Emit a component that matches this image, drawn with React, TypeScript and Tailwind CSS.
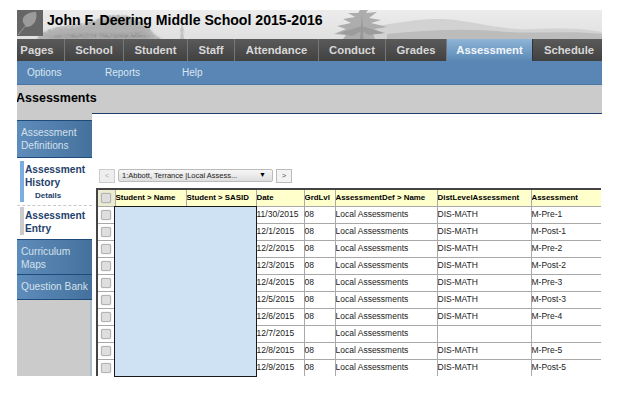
import React from 'react';

const tabs = [
  { label: 'Pages', w: 'w-[48px] pr-[7px]' },
  { label: 'School', w: 'w-[59px]' },
  { label: 'Student', w: 'w-[64px]' },
  { label: 'Staff', w: 'w-[47px]' },
  { label: 'Attendance', w: 'w-[84px]' },
  { label: 'Conduct', w: 'w-[67px]' },
  { label: 'Grades', w: 'w-[61px]' },
  { label: 'Assessment', w: 'w-[86px]', active: true },
  { label: 'Schedule', w: 'w-[69px] pl-[3px]' }
];

const rows = [
  ['11/30/2015', '08', 'DIS-MATH', 'M-Pre-1'],
  ['12/1/2015', '08', 'DIS-MATH', 'M-Post-1'],
  ['12/2/2015', '08', 'DIS-MATH', 'M-Pre-2'],
  ['12/3/2015', '08', 'DIS-MATH', 'M-Post-2'],
  ['12/4/2015', '08', 'DIS-MATH', 'M-Pre-3'],
  ['12/5/2015', '08', 'DIS-MATH', 'M-Post-3'],
  ['12/6/2015', '08', 'DIS-MATH', 'M-Pre-4'],
  ['12/7/2015', '', '', ''],
  ['12/8/2015', '08', 'DIS-MATH', 'M-Pre-5'],
  ['12/9/2015', '08', 'DIS-MATH', 'M-Post-5']
];

function Check() {
  return <div className="h-[10px] w-[10px] rounded-[2px] border border-[#b4b4b4] bg-[#dedede] shadow-[0_0_1px_#999]" />;
}

function SideBlue({ children, className = '' }: { children: React.ReactNode; className?: string }) {
  return (
    <div className={`border-b border-[#1f4a7c] bg-gradient-to-r from-[#5f8dbb] to-[#44719c] pl-[4px] text-[10.2px] leading-[12.5px] text-[#d4e0ec] ${className}`}>
      {children}
    </div>
  );
}

function HeaderArt() {
  return (
    <svg className="absolute inset-0 h-full w-full" viewBox="0 0 585 29">
      <defs>
        <filter id="soft" x="-20%" y="-20%" width="140%" height="140%">
          <feGaussianBlur stdDeviation="1.6" />
        </filter>
        <filter id="leafy" x="0" y="0" width="100%" height="100%">
          <feTurbulence type="fractalNoise" baseFrequency="0.35" numOctaves="2" seed="4" />
          <feColorMatrix values="0 0 0 0 0.42  0 0 0 0 0.42  0 0 0 0 0.42  1.8 0 0 0 -0.4" />
          <feComposite in2="SourceGraphic" operator="in" />
        </filter>
        <filter id="needle" x="-5%" y="-5%" width="110%" height="110%">
          <feGaussianBlur stdDeviation="0.5" />
        </filter>
      </defs>
      {/* far hills */}
      <path d="M340 18 C380 14 400 8 425 9 C450 10 470 17 500 19 C525 20 550 16 585 22 V29 H340 Z" fill="#d2d2d2" />
      <path d="M370 24 C410 20 450 18 490 22 C520 24 555 20 585 24 V29 H370 Z" fill="#bcbcbc" />
      {/* tree mass on the left */}
      <g filter="url(#soft)">
        <path d="M20 29 C30 14 60 20 80 11 C95 4 115 6 124 14 C135 18 132 24 145 29 Z" fill="#b2b2b2" />
        <path d="M26 29 C50 20 90 26 125 22 L135 29 Z" fill="#8f8f8f" />
      </g>
      <path d="M20 29 C30 12 60 18 80 9 C95 2 115 4 124 12 C135 16 132 24 145 29 Z" fill="#888" filter="url(#leafy)" />
      {/* small distant tree */}
      <path d="M163 29 L164 20 L162 24 L165 14 L168 24 L166 20 L167 29 Z" fill="#c4c4c4" />
      {/* pine */}
      <g fill="#adadad" filter="url(#needle)">
        <path d="M343 0 L351 0 L349 3 L360 2 L352 8 L364 10 L354 13 L370 17 L357 19 L365 24 L356 24 L358 29 H326 L329 25 L317 24 L329 19 L320 16 L334 13 L326 9 L338 7 L331 3 L341 3 Z" />
      </g>
      <path d="M322 23 L345 16 L368 23 L352 25 L345 21 L335 26 Z" fill="#9c9c9c" filter="url(#needle)" />
      <path d="M345 4 L346.5 29 H343 Z" fill="#989898" />
    </svg>
  );
}

export default function App() {
  return (
    <div className="h-[402px] w-[628px] overflow-hidden bg-white pl-[17px] pt-[10px] font-['Liberation_Sans',Arial,sans-serif]">
      <div className="relative w-[585px]">
        <header className="relative flex h-[29px] items-start overflow-hidden bg-gradient-to-b from-[#ececec] to-[#e0e0e0]">
          <HeaderArt />
          <div className="relative flex h-[26px] w-[26px] items-center justify-center bg-[#666]">
            <svg viewBox="0 0 26 26" className="h-[26px] w-[26px]">
              <path d="M1 25 C6 19 10 14 12 11" stroke="#999" strokeWidth="1" fill="none" />
              <path d="M7 14 C3 8 9 2 19 2 C21 9 17 17 9 17 Z" fill="#9b9b9b" />
            </svg>
          </div>
          <h1 className="relative ml-[4px] mt-[3px] text-[14.1px] font-bold leading-[14px] text-black">
            John F. Deering Middle School 2015-2016
          </h1>
        </header>

        <nav className="flex h-[22px] bg-gradient-to-b from-[#5a5a5a] to-[#414141]">
          {tabs.map((t) => (
            <div
              key={t.label}
              className={`${t.w} flex items-center justify-center border-r text-[11.3px] font-bold ${
                t.active
                  ? 'border-[#333] bg-gradient-to-b from-[#8fb4d6] to-[#5a89b6] text-[#f0f5fa]'
                  : 'border-[#777] text-[#d8d8d8] last:border-r-0'
              }`}
            >
              {t.label}
            </div>
          ))}
        </nav>

        <div className="flex h-[24px] items-center border-b border-[#4a76a3] bg-[#5986b5] pl-[10px] text-[10px] text-[#dbe6f1]">
          <span className="w-[78px]">Options</span>
          <span className="w-[77px]">Reports</span>
          <span>Help</span>
        </div>

        <div className="flex h-[28px] items-start overflow-hidden bg-[#cbcbcb] pt-[7px]">
          <h2 className="-ml-[1px] text-[12.5px] font-bold leading-[13px] text-black">Assessments</h2>
        </div>

        <div className="flex h-[263px]">
          <aside className="flex w-[75px] flex-col">
            <div className="h-[8px] border-b border-[#1f4a7c] bg-[#cbcbcb]" />
            <SideBlue className="h-[37px] pt-[6px]">
              Assessment
              <br />
              Definitions
            </SideBlue>
            <div className="bg-white">
              <div className="pl-[3px] pt-[3px]">
                <div className="h-[41px] border-l-[4px] border-[#7aaee2] pl-[1px] pt-[3px] text-[10.2px] font-bold leading-[12.5px] text-[#1f3f6b]">
                  Assessment
                  <br />
                  History
                  <div className="pl-[10px] pt-[1px] text-[8px] leading-[12px]">Details</div>
                </div>
              </div>
              <div className="mt-[3px] border-t border-dashed border-[#c8c8c8] pb-[4px] pl-[3px] pt-[1px]">
                <div className="h-[28px] border-l-[4px] border-[#cbcbcb] pl-[1px] pt-[3px] text-[10.2px] font-bold leading-[12.5px] text-[#1f3f6b]">
                  Assessment
                  <br />
                  Entry
                </div>
              </div>
            </div>
            <SideBlue className="h-[36px] border-t pt-[6px]">
              Curriculum
              <br />
              Maps
            </SideBlue>
            <SideBlue className="flex h-[25px] items-center">Question Bank</SideBlue>
            <div className="flex-1 border-r-2 border-[#a9bdd1] bg-[#cbcbcb]" />
          </aside>

          <main className="min-w-0 flex-1 border-t border-[#1f3f6b] bg-white pl-[4px] pt-[55px]">
            <div className="flex h-[19px] items-start pl-[3px]">
              <div className="flex h-[14px] w-[16px] items-center justify-center border border-[#ccc] bg-[#eee] text-[7px] text-[#aaa]">&lt;</div>
              <div className="ml-[3px] flex h-[13px] w-[155px] items-center justify-between rounded-[2px] border border-[#bbb] bg-gradient-to-b from-[#f6f6f6] to-[#dedede] px-[3px] text-[7.5px] text-[#222]">
                <span>1:Abbott, Terrance |Local Assess...</span>
                <span className="pr-[3px] text-[7px] text-black">▼</span>
              </div>
              <div className="ml-[3px] flex h-[14px] w-[16px] items-center justify-center border border-[#bbb] bg-[#f3f3f3] text-[7px] text-[#444]">&gt;</div>
            </div>

            <table className="w-[505px] table-fixed border-collapse border-l-2 border-t-2 border-l-[#444] border-t-[#444] text-[8.5px]">
              <colgroup>
                <col className="w-[18px]" />
                <col className="w-[71px]" />
                <col className="w-[70px]" />
                <col className="w-[48px]" />
                <col className="w-[31px]" />
                <col className="w-[102px]" />
                <col className="w-[94px]" />
                <col />
              </colgroup>
              <thead>
                <tr className="h-[17px] bg-[#ffffcc] text-left text-[7.9px] text-black">
                  <th className="border-r border-[#aaa] bg-[#ececd0]"><div className="flex justify-center"><Check /></div></th>
                  {['Student > Name', 'Student > SASID', 'Date', 'GrdLvl', 'AssessmentDef > Name', 'DistLevelAssessment', 'Assessment'].map((h) => (
                    <th key={h} className="overflow-hidden whitespace-nowrap border-r border-[#aaa] font-bold last:border-r-0">{h}</th>
                  ))}
                </tr>
              </thead>
              <tbody className="text-[#222]">
                {rows.map((r) => (
                  <tr key={r[0]} className="h-[17px] border-t border-[#a8a8a8]">
                    <td className="border-r border-[#aaa]"><div className="flex justify-center"><Check /></div></td>
                    <td />
                    <td className="border-r border-[#aaa]" />
                    <td className="border-r border-[#aaa]">{r[0]}</td>
                    <td className="border-r border-[#aaa]">{r[1]}</td>
                    <td className="border-r border-[#aaa]">Local Assessments</td>
                    <td className="border-r border-[#aaa]">{r[2]}</td>
                    <td>{r[3]}</td>
                  </tr>
                ))}
              </tbody>
            </table>
          </main>
        </div>

        {/* redaction block over the name columns */}
        <div className="absolute left-[97px] top-[196px] h-[171px] w-[143px] border border-[#1a1a1a] bg-[#cfe2f3]" />
      </div>
    </div>
  );
}
